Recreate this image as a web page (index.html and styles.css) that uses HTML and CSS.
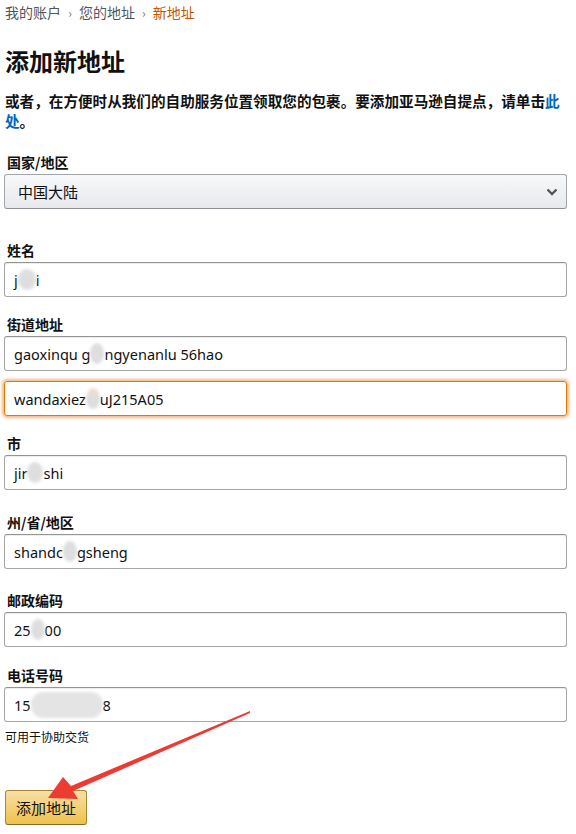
FILE: index.html
```html
<!DOCTYPE html>
<html lang="zh">
<head>
    <meta charset="UTF-8">
    <meta name="viewport" content="width=device-width, initial-scale=1.0">
    <title>添加新地址</title>
    <link rel="stylesheet" href="styles.css">
</head>
<body>
    <div class="page">

        <!-- Migas de pan -->
        <div class="breadcrumb">
            <a href="#">我的账户</a>
            <span class="sep">›</span>
            <a href="#">您的地址</a>
            <span class="sep">›</span>
            <span class="current">新地址</span>
        </div>

        <h1 class="title">添加新地址</h1>

        <p class="intro">或者，在方便时从我们的自助服务位置领取您的包裹。要添加亚马逊自提点，请单击<a href="#">此处</a>。</p>

        <form class="address-form">
            <div class="field field-country">
                <label>国家/地区</label>
                <div class="dropdown">
                    <span>中国大陆</span>
                    <svg class="chevron" width="12" height="8" viewBox="0 0 12 8">
                        <path d="M1.5 1.5 L6 6 L10.5 1.5" fill="none" stroke="#555" stroke-width="2.4"/>
                    </svg>
                </div>
            </div>

            <div class="field">
                <label>姓名</label>
                <div class="input">j<span class="blur" style="width: 18px"></span>i</div>
            </div>

            <div class="field">
                <label>街道地址</label>
                <div class="input">gaoxinqu g<span class="blur" style="width: 14px"></span>ngyenanlu 56hao</div>
                <div class="input focused">wandaxiez<span class="blur warm" style="width: 14px"></span>uJ215A05</div>
            </div>

            <div class="field field-city">
                <label>市</label>
                <div class="input">jir<span class="blur" style="width: 16px"></span>shi</div>
            </div>

            <div class="field field-region">
                <label>州/省/地区</label>
                <div class="input">shandc<span class="blur" style="width: 14px"></span>gsheng</div>
            </div>

            <div class="field field-postal">
                <label>邮政编码</label>
                <div class="input">25<span class="blur" style="width: 14px"></span>00</div>
            </div>

            <div class="field">
                <label>电话号码</label>
                <div class="input">15<span class="blur long" style="width: 72px"></span>8</div>
                <div class="hint">可用于协助交货</div>
            </div>

            <button type="button" class="submit-btn">添加地址</button>
        </form>

        <!-- Flecha de anotación -->
        <svg class="annotation" width="576" height="834" viewBox="0 0 576 834">
            <polygon points="250,711 71,786 63,777 48,798 78,799 73,791 250,713" fill="#ee3b32"/>
        </svg>
    </div>
</body>
</html>
```

FILE: styles.css
```css
body {
    margin: 0;
    padding: 0;
    background-color: #fff;
    color: #111;
    font-family: "Noto Sans CJK SC", "Noto Sans", sans-serif;
}

.page {
    position: relative;
    padding: 2px 9px 0 4px;
}

.breadcrumb {
    font-size: 14px;
    line-height: 20px;
    color: #555;
    padding-left: 1px;
}

.breadcrumb a {
    color: #555;
    text-decoration: none;
}

.breadcrumb .sep {
    margin: 0 4px;
    color: #767676;
    font-size: 12px;
}

.breadcrumb .current {
    color: #c45500;
}

.title {
    margin: 22px 0 0 1px;
    font-size: 24px;
    line-height: 32px;
    font-weight: 700;
}

.intro {
    margin: 14px 0 0 1px;
    font-size: 14.6px;
    line-height: 20px;
    font-weight: 700;
}

.intro a {
    color: #0066c0;
    text-decoration: none;
}

.address-form {
    margin-top: 22px;
}

.field {
    margin-bottom: 18px;
}

.field-country {
    margin-bottom: 32px;
}

.field-city {
    margin-bottom: 23px;
}

.field-region {
    margin-bottom: 22px;
}

.field-postal {
    margin-bottom: 19px;
}

.field label {
    display: block;
    padding-left: 3px;
    padding-bottom: 2px;
    font-size: 14px;
    line-height: 19px;
    font-weight: 700;
}

.dropdown {
    display: flex;
    align-items: center;
    justify-content: space-between;
    box-sizing: border-box;
    height: 35px;
    padding: 0 8px 0 13px;
    border: 1px solid #a2a6ac;
    border-bottom-color: #8d9096;
    border-radius: 3px;
    background: linear-gradient(to bottom, #f7f8fa, #e7e9ec);
    font-size: 15px;
    color: #111;
}

.input {
    display: flex;
    align-items: center;
    box-sizing: border-box;
    height: 35px;
    padding: 0 9px;
    border: 1px solid #a6a6a6;
    border-top-color: #949494;
    border-radius: 3px;
    box-shadow: 0 1px 0 rgba(255, 255, 255, 0.5), 0 1px 0 rgba(0, 0, 0, 0.07) inset;
    font-family: "Noto Sans", "Noto Sans CJK SC", sans-serif;
    font-size: 14.5px;
    color: #111;
    white-space: pre;
}

.input + .input {
    margin-top: 10px;
}

.input.focused {
    border-color: #e77600;
    box-shadow: 0 0 3px 2px rgba(228, 121, 17, 0.5);
}

.blur {
    display: inline-block;
    height: 21px;
    border-radius: 50%;
    background-color: #dedede;
    filter: blur(1.5px);
}

.blur.warm {
    background: linear-gradient(to bottom, #f3dccb, #dedede 45%);
}

.blur.long {
    height: 26px;
    border-radius: 12px;
    background-color: #e4e4e4;
}

.hint {
    margin-top: 7px;
    font-size: 12px;
    line-height: 16px;
    color: #111;
    padding-left: 1px;
}

.submit-btn {
    margin-top: 27px;
    margin-left: 1px;
    height: 35px;
    padding: 0 10px;
    border: 1px solid #a88734;
    border-bottom-color: #846a29;
    border-radius: 3px;
    background: linear-gradient(to bottom, #f7dfa5, #f0c14b);
    font-family: "Noto Sans CJK SC", sans-serif;
    font-size: 15px;
    color: #111;
    cursor: pointer;
}

.annotation {
    position: absolute;
    top: 0;
    left: 0;
    pointer-events: none;
}
```
